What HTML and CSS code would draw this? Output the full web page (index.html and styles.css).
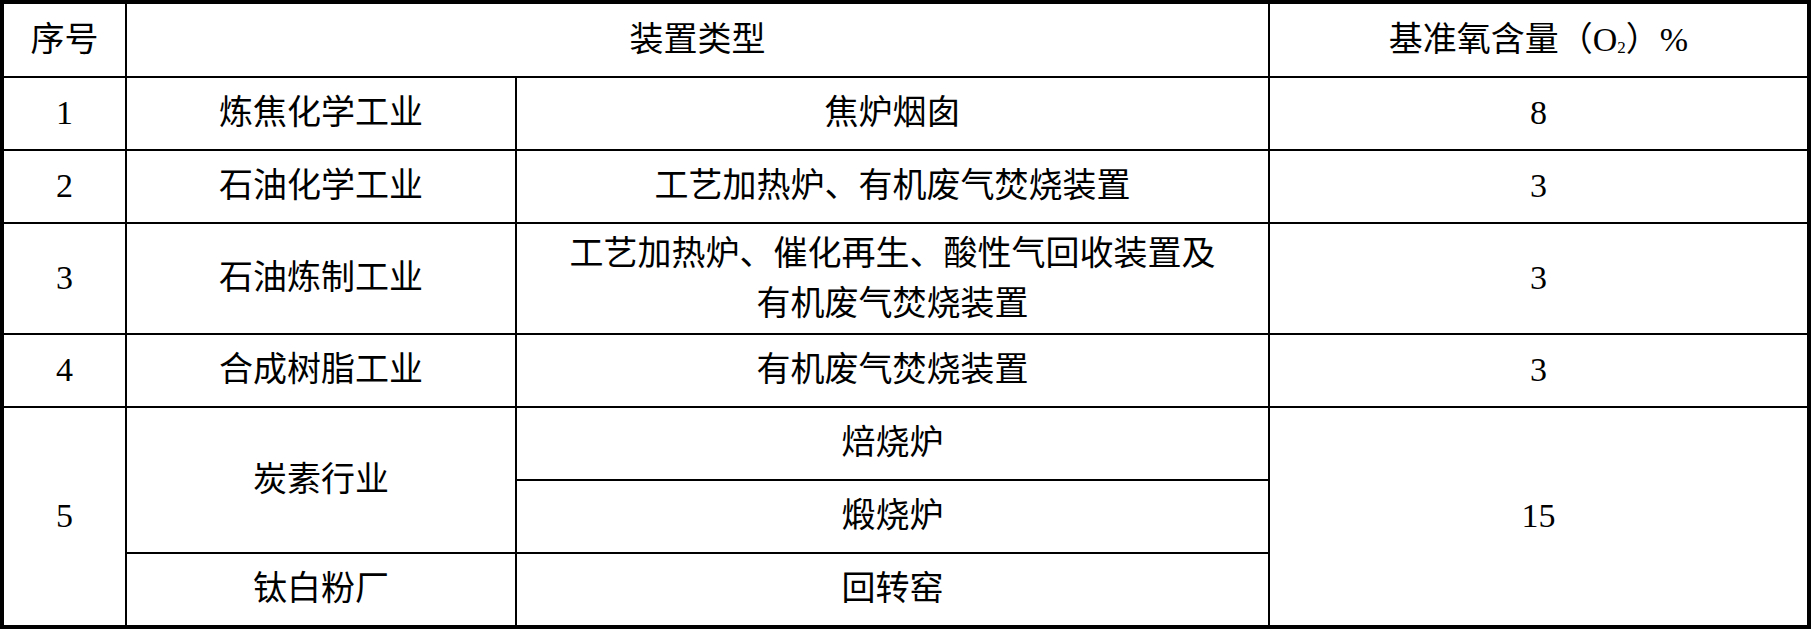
FILE: index.html
```html
<!DOCTYPE html>
<html lang="zh-CN">
<head>
<meta charset="utf-8">
<title>基准氧含量</title>
<link rel="stylesheet" href="styles.css">
</head>
<body>
<div class="sheet">
  <div class="cell">序号</div>
  <div class="cell span-c2">装置类型</div>
  <div class="cell"><span class="label">基准氧含量（O<sub class="sub">2</sub>）%</span></div>

  <div class="cell num">1</div>
  <div class="cell">炼焦化学工业</div>
  <div class="cell">焦炉烟囱</div>
  <div class="cell num">8</div>

  <div class="cell num">2</div>
  <div class="cell">石油化学工业</div>
  <div class="cell">工艺加热炉、有机废气焚烧装置</div>
  <div class="cell num">3</div>

  <div class="cell num">3</div>
  <div class="cell">石油炼制工业</div>
  <div class="cell multi"><span class="label">工艺加热炉、催化再生、酸性气回收装置及<br>有机废气焚烧装置</span></div>
  <div class="cell num">3</div>

  <div class="cell num">4</div>
  <div class="cell">合成树脂工业</div>
  <div class="cell">有机废气焚烧装置</div>
  <div class="cell num">3</div>

  <div class="cell num span-r3">5</div>
  <div class="cell span-r2">炭素行业</div>
  <div class="cell">焙烧炉</div>
  <div class="cell num span-r3">15</div>
  <div class="cell">煅烧炉</div>
  <div class="cell">钛白粉厂</div>
  <div class="cell">回转窑</div>
</div>
</body>
</html>
```

FILE: styles.css
```css
html, body {
  margin: 0;
  padding: 0;
  background: #fff;
}

.sheet {
  display: grid;
  grid-template-columns: 121px 388px 751px 537px;
  grid-template-rows: 72px 71px 71px 109px 71px 71px 71px 71px;
  gap: 2px;
  width: max-content;
  background: #000;
  border: 4px solid #000;
  font-family: "Liberation Serif", "Noto Sans CJK SC", serif;
  font-size: 34px;
  color: #000;
}

.cell {
  background: #fff;
  display: flex;
  align-items: center;
  justify-content: center;
  text-align: center;
  line-height: 1.2;
  white-space: nowrap;
}

.label {
  display: block;
}

.num {
  font-size: 34px;
}

.multi {
  line-height: 50px;
}

.span-c2 {
  grid-column: span 2;
}

.span-r2 {
  grid-row: span 2;
}

.span-r3 {
  grid-row: span 3;
}

.sub {
  font-size: 0.5em;
  vertical-align: -0.1em;
  line-height: 0;
}
```
